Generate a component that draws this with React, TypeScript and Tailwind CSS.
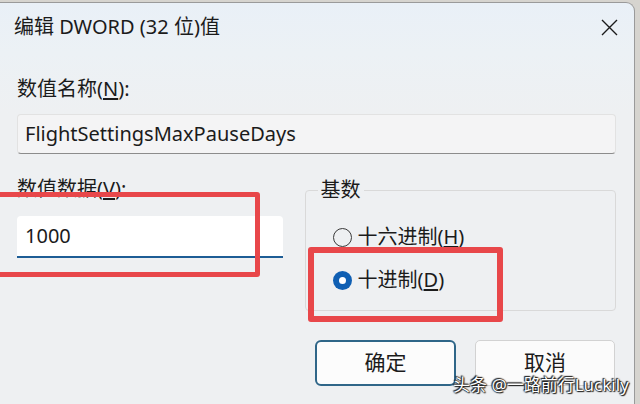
import React from "react";

const font = { fontFamily: '"Noto Sans", "Noto Sans CJK SC", sans-serif' };

function Radio({ checked, label, hot }: { checked: boolean; label: string; hot: string }) {
  return (
    <div className="flex items-center h-[28px]">
      {checked ? (
        <div className="w-[19px] h-[19px] rounded-full bg-[#0f5fb3] flex items-center justify-center">
          <div className="w-[7px] h-[7px] rounded-full bg-white" />
        </div>
      ) : (
        <div className="w-[19px] h-[19px] rounded-full border-[1.5px] border-[#3a3a3a]" />
      )}
      <span className="ml-[6px] text-[20px] text-[#1b1b1b] leading-[28px]">
        {label}(<span className="underline underline-offset-2">{hot}</span>)
      </span>
    </div>
  );
}

export default function App() {
  return (
    <div className="relative w-[640px] h-[404px] overflow-hidden bg-[#d6d4cf]" style={font}>
      <div className="mt-[2px] w-[635px] h-[402px] flex flex-col bg-[linear-gradient(180deg,#e9f0f7_0px,#ecf1f5_50px,#eef0f2_110px,#eef0f2_100%)] rounded-tr-[9px] border-r border-t border-[#9a9a9a] overflow-hidden">
        {/* Title bar */}
        <div className="h-[48px] shrink-0 flex items-center justify-between pl-[14px] pr-[16px]">
          <span className="text-[20px] leading-[28px] text-[#1b1b1b]">编辑 DWORD (32 位)值</span>
          <svg width="17" height="17" viewBox="0 0 17 17" className="text-[#1b1b1b]">
            <path d="M1 1 L16 16 M16 1 L1 16" stroke="currentColor" strokeWidth="1.4" fill="none" />
          </svg>
        </div>
        {/* Body */}
        <div className="flex flex-col pl-[17px] pr-[18px]">
          <div className="mt-[24px] text-[20px] leading-[28px] text-[#1b1b1b]">
            数值名称(<span className="underline underline-offset-2">N</span>):
          </div>
          <div className="mt-[11px] h-[40px] flex items-center pl-[7px] bg-[#f4f4f5] border border-[#e2e2e2] border-b-[#8c8c8c] rounded-[4px] text-[20px] text-[#1b1b1b]">
            FlightSettingsMaxPauseDays
          </div>
          <div className="flex">
            <div className="w-[266px] flex flex-col">
              <div className="mt-[21px] text-[20px] leading-[28px] text-[#1b1b1b]">
                数值数据(<span className="underline underline-offset-2">V</span>):
              </div>
              <div className="mt-[13px] h-[42px] flex items-center pl-[8px] bg-white border-b-2 border-[#1d5d95] rounded-t-[4px] text-[20px] text-[#1b1b1b]">
                1000
              </div>
            </div>
            <div className="ml-[22px] w-[312px] mt-[36px] h-[121px] relative border border-[#d9d9d9] rounded-[4px]">
              <span className="absolute left-[12px] top-[-15px] px-[3px] bg-[#eef0f2] text-[20px] leading-[28px] text-[#1b1b1b]">
                基数
              </span>
              <div className="flex flex-col pl-[27px] pt-[32px] gap-[15px]">
                <Radio checked={false} label="十六进制" hot="H" />
                <Radio checked={true} label="十进制" hot="D" />
              </div>
            </div>
          </div>
          <div className="mt-[29px] flex pl-[298px] gap-[19px]">
            <div className="w-[141px] h-[46px] flex items-center justify-center bg-[#fcfcfc] border-2 border-[#2f6688] rounded-[6px] text-[21px] text-[#1b1b1b]">
              确定
            </div>
            <div className="w-[140px] h-[46px] flex items-center justify-center bg-[#fbfbfb] border border-[#d2d2d2] rounded-[5px] text-[21px] text-[#1b1b1b]">
              取消
            </div>
          </div>
        </div>
      </div>

      {/* annotation boxes */}
      <div className="absolute left-[-10px] top-[192px] w-[270px] h-[85px] border-[5px] border-[#e8474a] rounded-[3px]" />
      <div className="absolute left-[308px] top-[247px] w-[195px] h-[75px] border-[6px] border-[#e8474a] rounded-[3px]" />

      {/* watermark */}
      <div className="absolute left-[453px] top-[374px] text-[17px] leading-[22px] text-white [text-shadow:0_0_1px_#111,0_0_2px_#111,1px_1px_1px_#222,-1px_-1px_1px_#222]">
        头条 @一路前行Luckily
      </div>
    </div>
  );
}
